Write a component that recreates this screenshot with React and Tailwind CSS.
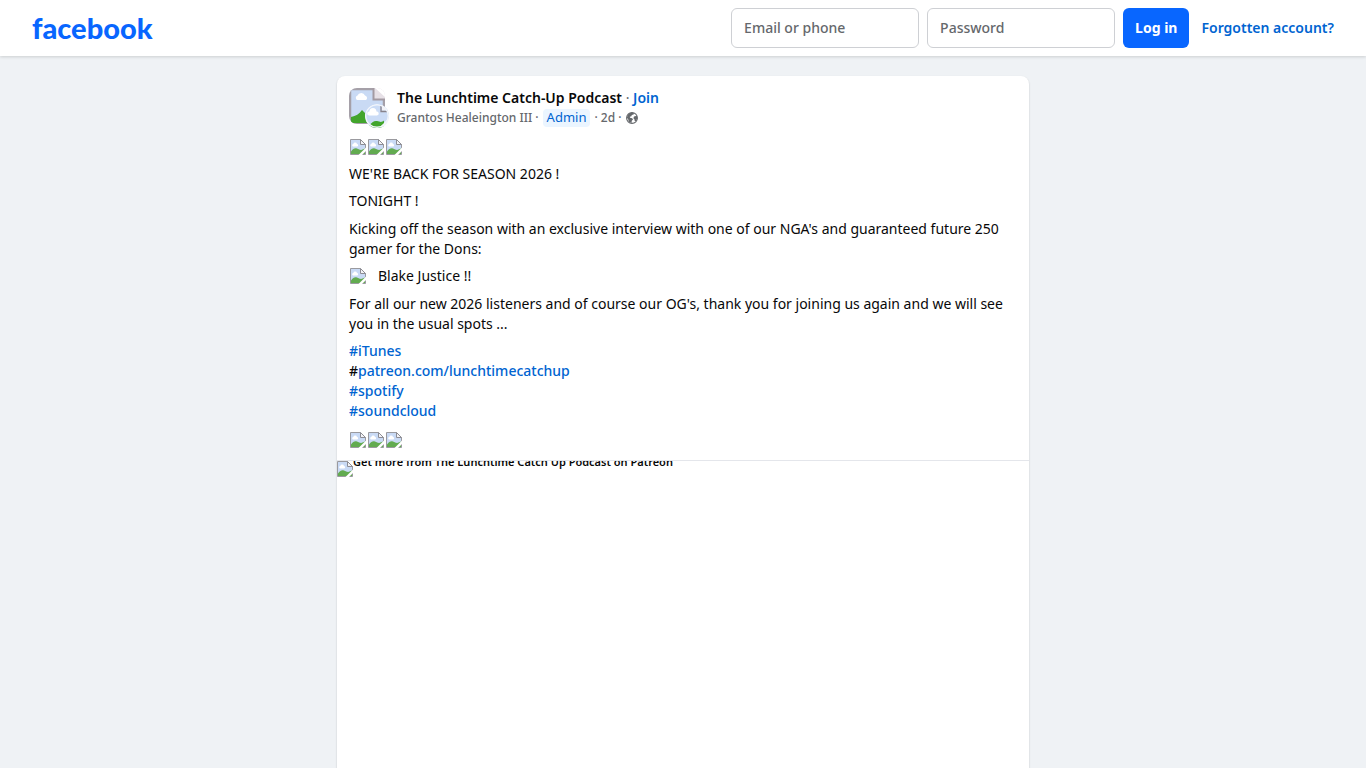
import React, { useState } from "react";

const BrokenImage = ({ className, label }) => (
    <svg className={className} viewBox="0 0 16 16" role="img" aria-label={label}>
        <path d="M.5.5h10l5 5v10H.5z" fill="#c9daf5" stroke="#9a9a9f" />
        <path
            d="M3 7.500a1.300 1.300 0 0 1 .3-2.500 1.900 1.900 0 0 1 3.700 0 1.300 1.300 0 0 1 .3 2.500z"
            fill="#fff"
        />
        <path d="M1 15v-2.500C2.800 10 4.500 9 6.200 9.300c2 .3 3 1.700 5 1.700L15 9.500V15z" fill="#62ab50" />
        <path d="M10.500.5v5h5z" fill="#f3f3f7" stroke="#8d8d94" />
        <path d="M16 8.500 8.500 16h3.500l4-4z" fill="#fff" />
    </svg>
);

const EmojiRow = () => (
    <div className="mt-[9px] flex h-5 items-center gap-0.5 px-px">
        <BrokenImage className="h-4 w-4" label="emoji" />
        <BrokenImage className="h-4 w-4" label="emoji" />
        <BrokenImage className="h-4 w-4" label="emoji" />
    </div>
);

const Avatar = () => (
    <div className="relative h-10 w-10 shrink-0">
        <svg
            className="h-9 w-9 rounded-lg"
            viewBox="0 0 36 36"
            role="img"
            aria-label="The Lunchtime Catch-Up Podcast"
        >
            <path d="M0 0h36v36H0z" fill="#fff" />
            <path d="M1 1h24l10 10v24H1z" fill="#c9daf4" stroke="#a5a0a8" strokeWidth="2.500" />
            <path
                d="M8 12a2.500 2.500 0 0 1 .5-4.500 4 4 0 0 1 7.500 0A2.500 2.500 0 0 1 17 12z"
                fill="#fff"
            />
            <path d="M2 35v-6c5-1 8-3 11-7l6 6v7z" fill="#42a52c" />
            <path d="M24 0v12h12V0z" fill="#e6e0e6" />
            <path d="M26 0h10v9z" fill="#fff" />
            <path d="M24.500 0v11.500H36" fill="none" stroke="#a39aa2" strokeWidth="2" />
        </svg>
        <svg
            className="absolute right-0 bottom-0 h-6 w-6 rounded-full"
            viewBox="0 0 24 24"
            role="img"
            aria-label="Grantos Healeington III"
        >
            <path d="M0 0h24v24H0z" fill="#cbdcf6" />
            <path d="M4 11.500a2 2 0 0 1 .4-4 3.500 3.500 0 0 1 7 0 2 2 0 0 1 .6 4z" fill="#fff" />
            <path d="M4 22c3-4 5-5.500 8-5s4 2 7-.5V24H4z" fill="#42a52c" />
            <path d="M17 0v6.500h7V0z" fill="#f4f2f6" />
            <path d="M16 2v5.500h6.500" fill="none" stroke="#87828b" strokeWidth="1.300" />
            <path d="M24 14 15 23l2 1 7-5z" fill="#fff" />
            <circle cx="12" cy="12" r="11.300" fill="none" stroke="#f1f5fb" strokeWidth="1.400" />
        </svg>
    </div>
);

const Globe = () => (
    <svg className="h-3 w-3" viewBox="0 0 12 12" role="img" aria-label="Public">
        <circle cx="6" cy="6" r="5.400" fill="#fff" stroke="#65686c" strokeWidth="1.100" />
        <path
            d="M.8 5.500 2.500 1.800 6 .6l2 .7-.4 1.200-1.800.4-.4 1.300-1.600.6.2 1 2.200.4.8 1.300-1.200 1.300-.3 2.300L2.700 9.800 2.300 7.500z"
            fill="#65686c"
        />
        <path d="m8 4.600 2.900-.8.400 2.400L9.800 9.300l-1.200-.6-.2-1.500-1-.9z" fill="#65686c" />
    </svg>
);

const Header = () => {
    const [login, setLogin] = useState({ email: "", pass: "" });

    const onChange = (e) =>
        setLogin({ ...login, [e.target.name]: e.target.value });

    return (
        <header className="sticky top-0 z-10 flex h-14 items-center justify-between bg-white px-8 shadow-[0_1px_3px_rgba(0,0,0,0.15)]">
            <a
                href="#"
                className="font-['Lato',sans-serif] text-[29px] leading-8 font-black text-[#0866ff]"
            >
                facebook
            </a>
            <form
                onSubmit={(e) => e.preventDefault()}
                className="flex items-center gap-2"
            >
                <input
                    className="h-10 w-[188px] rounded-md border border-[#ced0d4] px-3 pb-0.5 font-medium placeholder:text-[#65686c]"
                    type="text"
                    name="email"
                    aria-label="Email or phone"
                    placeholder="Email or phone"
                    value={login.email}
                    onChange={onChange}
                />
                <input
                    className="h-10 w-[188px] rounded-md border border-[#ced0d4] px-3 pb-0.5 font-medium placeholder:text-[#65686c]"
                    type="password"
                    name="pass"
                    aria-label="Password"
                    placeholder="Password"
                    value={login.pass}
                    onChange={onChange}
                />
                <button className="h-10 rounded-md bg-[#0866ff] px-3 font-bold text-white">
                    Log in
                </button>
                <a href="#" className="ml-1 font-semibold text-[#0064d1]">
                    Forgotten account?
                </a>
            </form>
        </header>
    );
};

const App = () => {
    return (
        <div className="min-h-screen bg-[#eff2f5] font-['Noto_Sans',sans-serif] text-sm leading-5 text-[#080809]">
            <Header />
            <main className="px-4 pt-5">
                <article className="mx-auto max-w-[692px] rounded-lg bg-white shadow-[0_1px_2px_rgba(0,0,0,0.2)]">
                    <div className="flex gap-2 px-3 pt-3">
                        <Avatar />
                        <div>
                            <h2 className="font-semibold">
                                The Lunchtime Catch-Up Podcast{" "}
                                <span className="font-normal text-[#65686c]">·</span>{" "}
                                <a href="#" className="text-[#0064d1]">
                                    Join
                                </a>
                            </h2>
                            <div className="flex items-center gap-1 text-xs leading-5 font-medium text-[#65686c]">
                                <span>Grantos Healeington III ·</span>
                                <span className="rounded-sm bg-[#ebf5ff] px-1 pb-0.5 text-[13px] leading-4 font-normal text-[#0064d1]">
                                    Admin
                                </span>
                                <span>· 2d ·</span>
                                <Globe />
                            </div>
                        </div>
                    </div>
                    <div className="px-3 pb-2.5">
                        <EmojiRow />
                        <p className="mt-[7px]">WE'RE BACK FOR SEASON 2026 !</p>
                        <p className="mt-[7px]">TONIGHT !</p>
                        <p className="mt-2">
                            Kicking off the season with an exclusive interview with one of
                            our NGA's and guaranteed future 250 gamer for the Dons:
                        </p>
                        <p className="mt-[7px] flex items-center gap-3 px-px">
                            <BrokenImage className="h-4 w-4" label="emoji" />
                            Blake Justice !!
                        </p>
                        <p className="mt-2">
                            For all our new 2026 listeners and of course our OG's, thank you
                            for joining us again and we will see you in the usual spots ...
                        </p>
                        <p className="mt-[7px] font-medium text-[#0064d1]">
                            <a href="#">#iTunes</a>
                            <br />
                            <span className="text-[#080809]">#</span>
                            <a href="#">patreon.com/lunchtimecatchup</a>
                            <br />
                            <a href="#">#spotify</a>
                            <br />
                            <a href="#">#soundcloud</a>
                        </p>
                        <EmojiRow />
                    </div>
                    <a
                        href="#"
                        className="flex aspect-[1.91] items-start overflow-hidden border-t border-[#e4e6eb] text-[11px] leading-[1px] font-semibold"
                    >
                        <BrokenImage className="h-4 w-4 shrink-0" label="" />
                        Get more from The Lunchtime Catch Up Podcast on Patreon
                    </a>
                </article>
            </main>
        </div>
    );
};

export default App;
